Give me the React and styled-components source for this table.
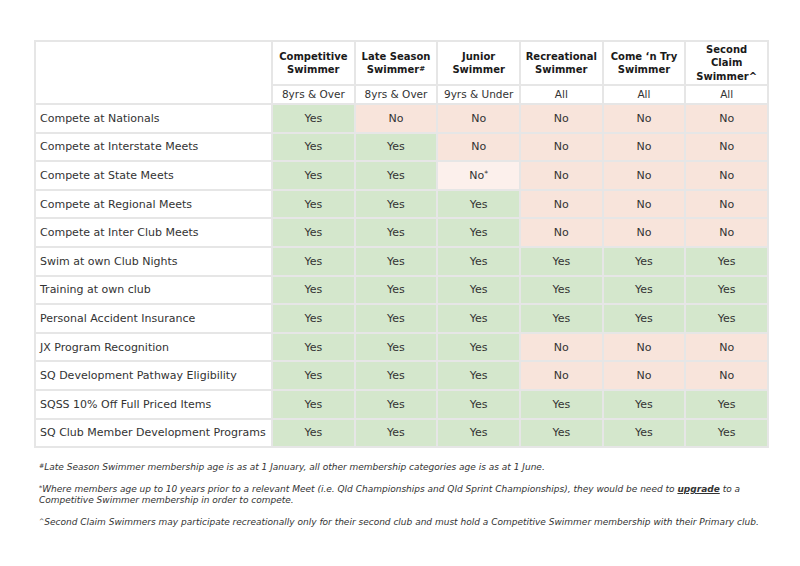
import styled, { createGlobalStyle } from 'styled-components'

const GlobalStyle = createGlobalStyle`
  body {
    margin: 0;
    background: #ffffff;
    font-family: "DejaVu Sans", "Liberation Sans", sans-serif;
    color: #333333;
  }
`

const Page = styled.div`
  width: 800px;
  height: 566px;
  padding: 40px 0 0 34px;
  box-sizing: border-box;
`

const Table = styled.table`
  width: 735px;
  border-collapse: collapse;
  table-layout: fixed;
  border: 2px solid #e6e6e6;
`

const HeadCell = styled.th`
  height: ${p => (p.$sub ? '17px' : '42px')};
  padding: 0;
  border: 2px solid #e6e6e6;
  font-size: ${p => (p.$sub ? '10.5px' : '10px')};
  font-weight: ${p => (p.$sub ? 400 : 700)};
  color: ${p => (p.$sub ? '#333333' : '#1a1a1a')};
  line-height: 13.5px;
  text-align: center;
  vertical-align: middle;
  background: #ffffff;
`

const LabelCell = styled.td`
  height: 26.6px;
  padding: 0 0 0 4px;
  border: 2px solid #e6e6e6;
  font-size: 11px;
  color: #333333;
  white-space: nowrap;
  vertical-align: middle;
`

const tones = {
  yes: '#d4e7cc',
  no: '#f8e4db',
  soft: '#fcf0ec',
}

const ValueCell = styled.td`
  padding: 0;
  border: 2px solid #e6e6e6;
  font-size: 11px;
  color: #333333;
  text-align: center;
  vertical-align: middle;
  background: ${p => tones[p.$tone]};
`

const Mark = styled.span`
  font-size: 0.7em;
  vertical-align: 0.35em;
  line-height: 0;
`

const Notes = styled.div`
  margin-top: 14px;
  padding-left: 5px;
  display: flex;
  flex-direction: column;
  gap: 11px;
  font-size: 9px;
  line-height: 11px;
  font-style: italic;
  color: #333333;
`

const Strong = styled.b`
  text-decoration: underline;
`

const columns = [
  { name: ['Competitive', 'Swimmer'], age: '8yrs & Over' },
  { name: ['Late Season', 'Swimmer'], mark: '#', age: '8yrs & Over' },
  { name: ['Junior', 'Swimmer'], age: '9yrs & Under' },
  { name: ['Recreational', 'Swimmer'], age: 'All' },
  { name: ["Come \u2018n Try", 'Swimmer'], age: 'All' },
  { name: ['Second', 'Claim', 'Swimmer^'], age: 'All' },
]

const Y = 'Yes'
const N = 'No'
const S = 'No*'

const rows = [
  ['Compete at Nationals', [Y, N, N, N, N, N]],
  ['Compete at Interstate Meets', [Y, Y, N, N, N, N]],
  ['Compete at State Meets', [Y, Y, S, N, N, N]],
  ['Compete at Regional Meets', [Y, Y, Y, N, N, N]],
  ['Compete at Inter Club Meets', [Y, Y, Y, N, N, N]],
  ['Swim at own Club Nights', [Y, Y, Y, Y, Y, Y]],
  ['Training at own club', [Y, Y, Y, Y, Y, Y]],
  ['Personal Accident Insurance', [Y, Y, Y, Y, Y, Y]],
  ['JX Program Recognition', [Y, Y, Y, N, N, N]],
  ['SQ Development Pathway Eligibility', [Y, Y, Y, N, N, N]],
  ['SQSS 10% Off Full Priced Items', [Y, Y, Y, Y, Y, Y]],
  ['SQ Club Member Development Programs', [Y, Y, Y, Y, Y, Y]],
]

const toneOf = v => (v === Y ? 'yes' : v === N ? 'no' : 'soft')

export default function App() {
  return (
    <Page>
      <GlobalStyle />
      <Table>
        <colgroup>
          <col style={{ width: 237 }} />
          {columns.map((c, i) => <col key={i} />)}
        </colgroup>
        <thead>
          <tr>
            <HeadCell rowSpan={2} />
            {columns.map((c, i) => (
              <HeadCell key={i}>
                {c.name.map((line, j) => (
                  <div key={j}>
                    {line}
                    {c.mark && j === c.name.length - 1 && <Mark>{c.mark}</Mark>}
                  </div>
                ))}
              </HeadCell>
            ))}
          </tr>
          <tr>
            {columns.map((c, i) => (
              <HeadCell key={i} $sub>{c.age}</HeadCell>
            ))}
          </tr>
        </thead>
        <tbody>
          {rows.map(([label, values]) => (
            <tr key={label}>
              <LabelCell>{label}</LabelCell>
              {values.map((v, i) => (
                <ValueCell key={i} $tone={toneOf(v)}>
                  {v === S ? <>No<Mark>*</Mark></> : v}
                </ValueCell>
              ))}
            </tr>
          ))}
        </tbody>
      </Table>
      <Notes>
        <div><Mark>#</Mark>Late Season Swimmer membership age is as at 1 January, all other membership categories age is as at 1 June.</div>
        <div>
          <Mark>*</Mark>Where members age up to 10 years prior to a relevant Meet (i.e. Qld Championships and Qld Sprint Championships), they would be need to <Strong>upgrade</Strong> to a
          <br />
          Competitive Swimmer membership in order to compete.
        </div>
        <div><Mark>^</Mark>Second Claim Swimmers may participate recreationally only for their second club and must hold a Competitive Swimmer membership with their Primary club.</div>
      </Notes>
    </Page>
  )
}
